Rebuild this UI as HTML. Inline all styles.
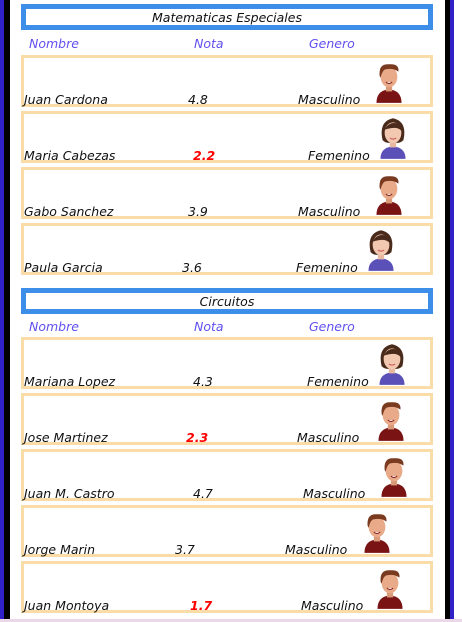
<!DOCTYPE html><html><head><style>
body{margin:0;width:462px;height:622px;position:relative;overflow:hidden;background:#fff;font-family:"DejaVu Sans","Liberation Sans",sans-serif;font-style:italic;font-size:12.5px;color:#111}
.a{position:absolute}
.card{position:absolute;left:21px;width:406px;height:46px;border:3px solid #fadca8}
.title{position:absolute;left:21px;width:402px;height:16px;border:5px solid #3d8ee8;text-align:center;line-height:17px;font-size:12.5px}
.h{position:absolute;color:#6050f0;font-size:12.5px}
.t{position:absolute;white-space:nowrap}
.r{color:#f00;font-weight:bold}
</style></head><body>
<div class="a" style="left:0;top:0;width:4px;height:622px;background:#3020c8"></div>
<div class="a" style="left:4px;top:0;width:6px;height:622px;background:#000"></div>
<div class="a" style="left:445px;top:0;width:5px;height:622px;background:#000"></div>
<div class="a" style="left:450px;top:0;width:4px;height:622px;background:#3020c8"></div>
<div class="a" style="left:0;top:619px;width:462px;height:3px;background:#ead8e8"></div>
<svg width="0" height="0" style="position:absolute"><defs>
<g id="m"><path d="M4 44 Q4 32 16 31 Q28 32 28 44Z" fill="#7a1414"/><rect x="13" y="26" width="6" height="7" fill="#d99a7a"/><ellipse cx="16" cy="19" rx="8" ry="10" fill="#e8aa88"/><path d="M7 18 Q6 6 16 7 Q26 6 25 14 Q20 10 12 12 Q9 14 8 20Z" fill="#7a3a20"/><path d="M13 24 Q16 27 19 24" fill="#fff" stroke="#822" stroke-width="1"/></g>
<g id="f"><path d="M6 26 Q2 8 16 5 Q30 8 26 26 Q22 30 16 28 Q10 30 6 26Z" fill="#4a2a1a"/><path d="M4 44 Q4 33 16 32 Q28 33 28 44Z" fill="#5a50b8"/><rect x="13" y="26" width="6" height="7" fill="#e8b8a0"/><ellipse cx="16" cy="19" rx="8" ry="10" fill="#f2c8b0"/><path d="M8 16 Q12 8 20 10 Q24 12 24 17 Q20 12 8 16Z" fill="#4a2a1a"/><path d="M13 24 Q16 26 19 24" stroke="#c55" fill="none"/></g>
</defs></svg>
<div class="title" style="top:4px">Matematicas Especiales</div>
<div class="h" style="left:29px;top:36px">Nombre</div><div class="h" style="left:194px;top:36px">Nota</div><div class="h" style="left:309px;top:36px">Genero</div>
<div class="title" style="top:288px">Circuitos</div>
<div class="h" style="left:29px;top:319px">Nombre</div><div class="h" style="left:194px;top:319px">Nota</div><div class="h" style="left:309px;top:319px">Genero</div>
<div id="rows"></div>
<script>
var d=[[55,"Juan Cardona","4.8",188,"Masculino",298,"m",373],
[111,"Maria Cabezas","2.2",193,"Femenino",308,"f",377],
[167,"Gabo Sanchez","3.9",188,"Masculino",298,"m",373],
[223,"Paula Garcia","3.6",182,"Femenino",296,"f",365],
[337,"Mariana Lopez","4.3",193,"Femenino",307,"f",376],
[393,"Jose Martinez","2.3",186,"Masculino",297,"m",375],
[449,"Juan M. Castro","4.7",193,"Masculino",303,"m",378],
[505,"Jorge Marin","3.7",175,"Masculino",285,"m",361],
[561,"Juan Montoya","1.7",190,"Masculino",301,"m",374]];
var h="";d.forEach(function(r){var y=r[0];var red=parseFloat(r[2])<3;
h+='<div class="card" style="top:'+y+'px"></div>';
h+='<div class="t" style="left:24px;top:'+(y+37)+'px">'+r[1]+'</div>';
h+='<div class="t'+(red?' r':'')+'" style="left:'+r[3]+'px;top:'+(y+37)+'px">'+r[2]+'</div>';
h+='<div class="t" style="left:'+r[5]+'px;top:'+(y+37)+'px">'+r[4]+'</div>';
h+='<svg class="a" style="left:'+(r[7]-2)+'px;top:'+(y+2)+'px" width="36" height="48" viewBox="0 0 32 46"><use href="#'+r[6]+'"/></svg>';});
document.getElementById("rows").innerHTML=h;
</script>
</body></html>
